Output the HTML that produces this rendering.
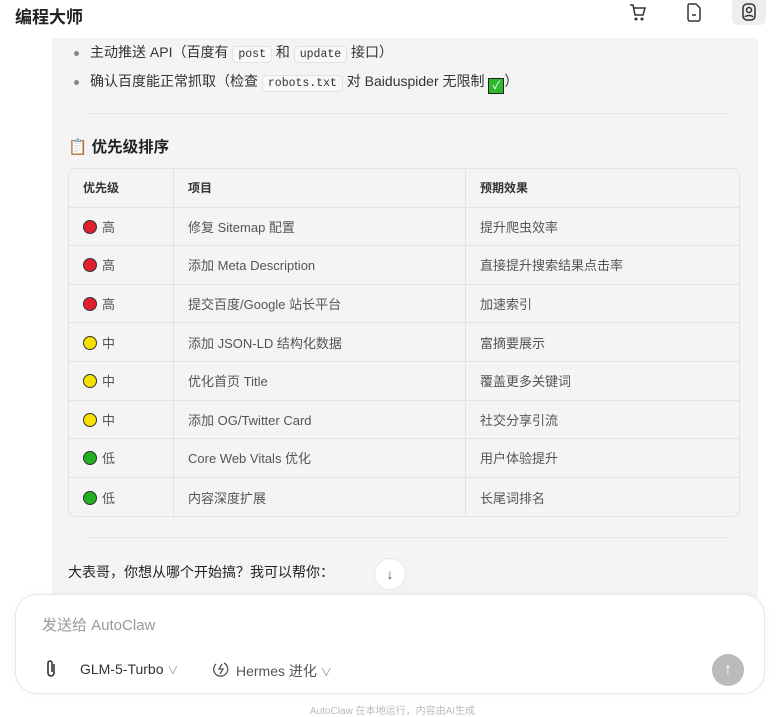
<!DOCTYPE html>
<html><head><meta charset="utf-8"><style>
*{box-sizing:border-box;margin:0;padding:0}
body{width:780px;height:707px;overflow:hidden;background:#fff;font-family:"Liberation Sans","Noto Sans CJK SC",sans-serif;color:#333;position:relative}
.top{position:absolute;left:0;top:0;width:780px;height:38px;background:#fff}
.title{position:absolute;left:15px;top:3px;font-size:17px;font-weight:bold;color:#222}
.ic{position:absolute;top:0;width:28px;height:26px}
.panel{position:absolute;left:52px;top:38px;width:706px;height:560px;background:#f4f4f4}
.li{position:absolute;left:38px;font-size:14px;color:#333}
.li:before{content:"";position:absolute;left:-16px;top:9px;width:5px;height:5px;border-radius:50%;background:#888}
code{font-family:"Liberation Mono",monospace;font-size:11.5px;background:#f8f8f8;border:1px solid #e3e3e3;border-radius:4px;padding:1px 5px}
.hr{position:absolute;left:36px;width:640px;height:1px;background:#e6e6e6}
h3{position:absolute;left:16px;top:97px;font-size:15.5px;font-weight:bold;color:#222}
table{position:absolute;left:16px;top:130px;width:672px;border-collapse:separate;border-spacing:0;border:1px solid #e2e2e2;border-radius:8px;font-size:13px;color:#555;overflow:hidden}
td,th{height:38.6px;border-bottom:1px solid #e2e2e2;border-right:1px solid #e2e2e2;padding-left:14px;text-align:left}
th{font-size:12px;font-weight:bold;color:#333}
tr:last-child td{border-bottom:none}
td:last-child,th:last-child{border-right:none}
.d{display:inline-block;width:14px;height:14px;border-radius:50%;border:1px solid #333;vertical-align:-2px;margin-right:5px}
.box{position:absolute;left:15px;top:594px;width:750px;height:100px;border:1px solid #e6e6e6;border-radius:22px;background:#fff;box-shadow:0 0 10px rgba(0,0,0,.04)}
</style></head><body>
<div class="panel">
<div class="li" style="top:4px">主动推送 API（百度有 <code>post</code> 和 <code>update</code> 接口）</div>
<div class="li" style="top:33px">确认百度能正常抓取（检查 <code>robots.txt</code> 对 Baiduspider 无限制 <span style="display:inline-block;width:16px;height:16px;background:#2db82d;border:1px solid #222;color:#fff;font-size:11px;text-align:center;line-height:14px;vertical-align:-3px">✓</span>）</div>
<div class="hr" style="top:75px"></div>
<h3>📋 优先级排序</h3>
<table>
<tr><th style="width:105px">优先级</th><th style="width:292px">项目</th><th>预期效果</th></tr>
<tr><td><span class="d" style="background:#e0202e"></span>高</td><td>修复 Sitemap 配置</td><td>提升爬虫效率</td></tr>
<tr><td><span class="d" style="background:#e0202e"></span>高</td><td>添加 Meta Description</td><td>直接提升搜索结果点击率</td></tr>
<tr><td><span class="d" style="background:#e0202e"></span>高</td><td>提交百度/Google 站长平台</td><td>加速索引</td></tr>
<tr><td><span class="d" style="background:#f5e000"></span>中</td><td>添加 JSON-LD 结构化数据</td><td>富摘要展示</td></tr>
<tr><td><span class="d" style="background:#f5e000"></span>中</td><td>优化首页 Title</td><td>覆盖更多关键词</td></tr>
<tr><td><span class="d" style="background:#f5e000"></span>中</td><td>添加 OG/Twitter Card</td><td>社交分享引流</td></tr>
<tr><td><span class="d" style="background:#22b022"></span>低</td><td>Core Web Vitals 优化</td><td>用户体验提升</td></tr>
<tr><td><span class="d" style="background:#22b022"></span>低</td><td>内容深度扩展</td><td>长尾词排名</td></tr>
</table>
<div class="hr" style="top:499px"></div>
<div style="position:absolute;left:16px;top:524px;font-size:14px;color:#222">大表哥，你想从哪个开始搞？我可以帮你：</div>
</div>
<div style="position:absolute;left:374px;top:558px;width:32px;height:32px;border-radius:50%;background:#fff;border:1px solid #e6e6e6;text-align:center;line-height:30px;font-size:14px;color:#555;z-index:2">↓</div>
<div class="top"><div class="title">编程大师</div>
<svg class="ic" style="left:624px;top:0" viewBox="0 0 28 26" fill="none" stroke="#333" stroke-width="1.5"><path d="M6 5h3l2 10h8l2-7H10"/><circle cx="12" cy="19" r=".8"/><circle cx="18" cy="19" r=".8"/></svg>
<svg class="ic" style="left:680px;top:0" viewBox="0 0 28 26" fill="none" stroke="#333" stroke-width="1.5"><path d="M9 4h7l4 4v11a2 2 0 0 1-2 2H10a2 2 0 0 1-2-2V6a2 2 0 0 1 1-2z"/><path d="M12 15h4"/></svg>
<div style="position:absolute;left:732px;top:0;width:34px;height:25px;background:#eee;border-radius:0 0 6px 6px"></div>
<svg class="ic" style="left:735px;top:0" viewBox="0 0 28 26" fill="none" stroke="#333" stroke-width="1.5"><rect x="8" y="4" width="12" height="16" rx="4"/><circle cx="14" cy="10" r="2.5"/><path d="M10 17c1-2 7-2 8 0"/></svg>
</div>
<div class="box">
<div style="position:absolute;left:26px;top:19px;font-size:15px;color:#999">发送给 AutoClaw</div>
<svg style="position:absolute;left:28px;top:64px" width="14" height="20" viewBox="0 0 14 20" fill="none" stroke="#333" stroke-width="1.6"><path d="M10 5v9a3 3 0 0 1-6 0V4a2 2 0 0 1 4 0v9"/></svg>
<div style="position:absolute;left:64px;top:66px;font-size:14px;color:#333">GLM-5-Turbo <span style="color:#999;font-size:11px">∨</span></div>
<svg style="position:absolute;left:196px;top:65px" width="18" height="18" viewBox="0 0 18 18" fill="none" stroke="#555" stroke-width="1.3"><path d="M4 4a7 7 0 1 0 8-1"/><path d="M10 4l-3 5h4l-3 5"/></svg>
<div style="position:absolute;left:220px;top:66px;font-size:14px;color:#555">Hermes 进化 <span style="color:#999;font-size:11px">∨</span></div>
<div style="position:absolute;left:696px;top:59px;width:32px;height:32px;border-radius:50%;background:#bbb;color:#fff;text-align:center;line-height:32px;font-size:16px">↑</div>
</div>
<div style="position:absolute;left:310px;top:702px;font-size:10px;color:#bbb">AutoClaw 在本地运行，内容由AI生成</div>
</body></html>
